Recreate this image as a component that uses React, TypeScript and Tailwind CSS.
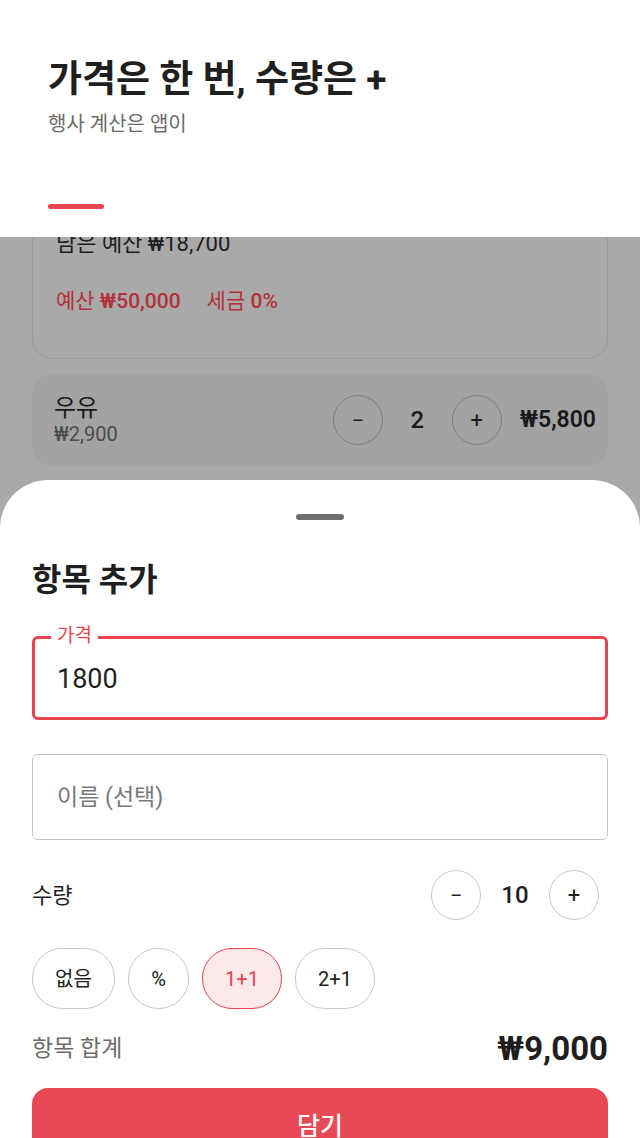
import React from 'react';

const font = { fontFamily: 'Roboto, "Noto Sans CJK KR", sans-serif' };

function Circle({ label, dim }: { label: string; dim?: boolean }) {
  return (
    <div
      className={`w-[50px] h-[50px] rounded-full border flex items-center justify-center text-[22px] ${
        dim ? 'border-[#7d7d7d] text-[#1c1c1c]' : 'border-[#c8c8c8] text-[#222]'
      }`}
    >
      {label}
    </div>
  );
}

function Chip({ label, active, w }: { label: string; active?: boolean; w: string }) {
  return (
    <div
      className={`${w} h-[61px] rounded-[30px] border-[1.5px] flex items-center justify-center text-[20px] ${
        active ? 'border-[#e8444f] bg-[#fde8ea] text-[#e8444f]' : 'border-[#c8c8c8] bg-white text-[#222]'
      }`}
    >
      {label}
    </div>
  );
}

export default function App() {
  return (
    <div className="w-[640px] h-[1138px] overflow-hidden flex flex-col bg-[#a9a9a9]" style={font}>
      {/* 상단 헤더 */}
      <div className="h-[237px] shrink-0 bg-white relative z-10 px-12 pt-[59px] flex flex-col">
        <h1 className="text-[37px] leading-[42px] font-bold text-[#1f1f1f]">가격은 한 번, 수량은 +</h1>
        <p className="mt-[10px] text-[20px] leading-[26px] text-[#6b6b6b]">행사 계산은 앱이</p>
        <div className="mt-auto mb-[28px] w-[56px] h-[5px] rounded-full bg-[#e8444f]" />
      </div>

      {/* 뒤쪽 화면 (어둡게) */}
      <div className="flex-1 flex flex-col">
        <div className="mx-8 -mt-[40px] rounded-[20px] border border-[#9c9c9c] bg-[#a9a9a9] pt-[32px] pb-[43px] px-[23px]">
          <div className="text-[22px] leading-[28px] text-[#1e1e1e]">남은 예산 ₩18,700</div>
          <div className="mt-[29px] flex gap-[26px] text-[21px] leading-[28px] text-[#b5303a]">
            <span>
              예산 <span className="font-medium">₩50,000</span>
            </span>
            <span>
              세금 <span className="font-medium">0%</span>
            </span>
          </div>
        </div>

        <div className="mx-8 mt-[15px] h-[92px] rounded-[20px] bg-[#a3a3a3] flex items-center pl-[22px] pr-3">
          <div className="flex flex-col">
            <span className="text-[24px] leading-[28px] text-[#1a1a1a]">우유</span>
            <span className="text-[20px] leading-[24px] text-[#4a4a4a]">₩2,900</span>
          </div>
          <div className="ml-auto flex items-center">
            <Circle label="−" dim />
            <span className="w-[69px] text-center text-[24px] font-medium text-[#1a1a1a]">2</span>
            <Circle label="+" dim />
            <span className="ml-[18px] text-[23px] font-semibold text-[#1a1a1a]">₩5,800</span>
          </div>
        </div>

        {/* 바텀 시트 */}
        <div className="mt-[14px] flex-1 bg-white rounded-t-[48px] px-8 pt-[34px] flex flex-col">
          <div className="self-center w-[48px] h-[6px] rounded-full bg-[#707070]" />
          <h2 className="mt-[40px] text-[32px] leading-[40px] font-semibold text-[#1f1f1f]">항목 추가</h2>

          <div className="mt-[36px] relative h-[84px] rounded-[6px] border-[3px] border-[#e8444f] flex items-center px-[22px] pt-[3px]">
            <span className="absolute -top-[16px] left-[16px] bg-white px-[6px] text-[19px] leading-[26px] text-[#e8444f]">
              가격
            </span>
            <span className="text-[27px] text-[#1f1f1f]">1800</span>
          </div>

          <div className="mt-[34px] h-[86px] rounded-[6px] border-[1.5px] border-[#c4c4c4] flex items-center px-[24px] pt-[3px]">
            <span className="text-[23px] text-[#787878]">이름 (선택)</span>
          </div>

          <div className="mt-[30px] h-[50px] flex items-center">
            <span className="text-[22px] text-[#1f1f1f]">수량</span>
            <div className="ml-auto mr-[9px] flex items-center">
              <Circle label="−" />
              <span className="w-[68px] text-center text-[24px] font-medium text-[#1f1f1f]">10</span>
              <Circle label="+" />
            </div>
          </div>

          <div className="mt-[28px] flex gap-[13px]">
            <Chip label="없음" w="w-[83px]" />
            <Chip label="%" w="w-[61px]" />
            <Chip label="1+1" active w="w-[80px]" />
            <Chip label="2+1" w="w-[80px]" />
          </div>

          <div className="mt-[20px] h-[40px] flex items-center justify-between">
            <span className="text-[23px] text-[#6b6b6b]">항목 합계</span>
            <span className="text-[33px] font-bold text-[#1f1f1f]">₩9,000</span>
          </div>

          <div className="mt-[19px] h-[72px] shrink-0 rounded-[16px] bg-[#e84a55] flex items-center justify-center pt-[6px]">
            <span className="text-[25px] font-medium text-white">담기</span>
          </div>
        </div>
      </div>
    </div>
  );
}
